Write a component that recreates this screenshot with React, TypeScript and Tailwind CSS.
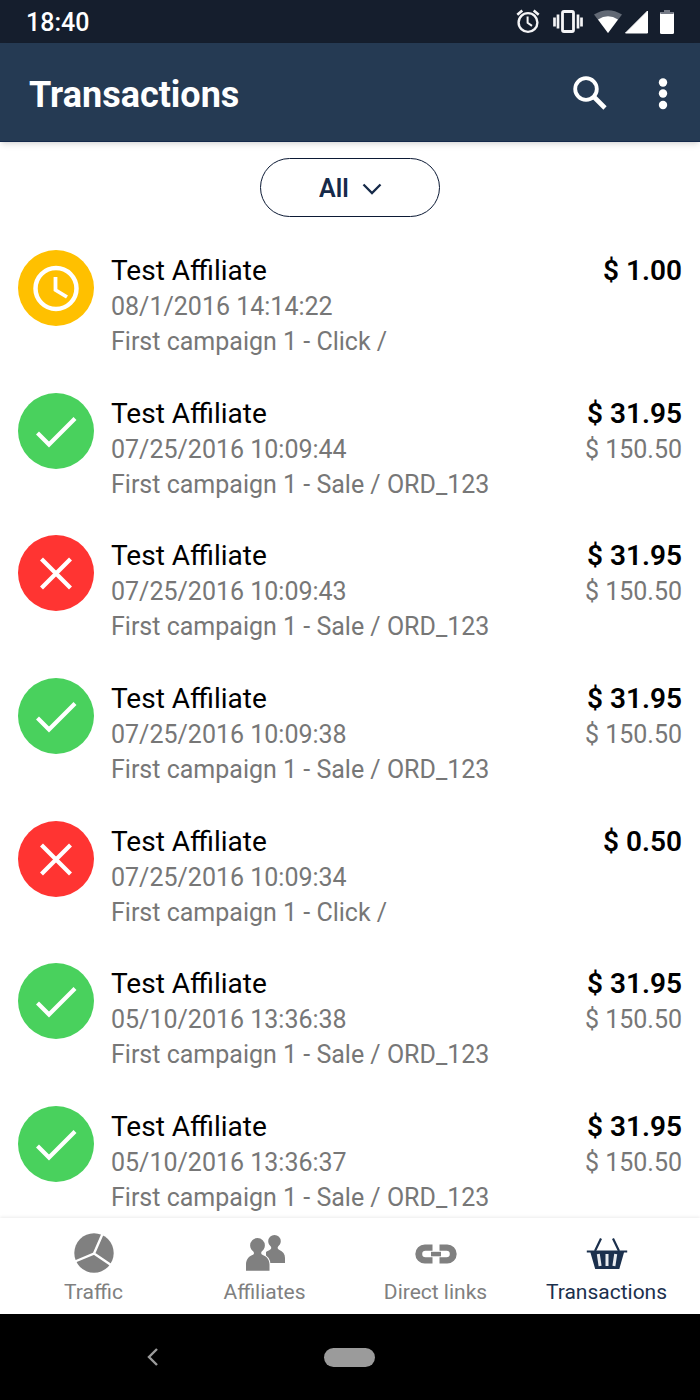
import { useState } from "react";

type Status = "pending" | "approved" | "declined";

interface Transaction {
  id: number;
  status: Status;
  date: string;
  details: string;
  commission: string;
  total?: string;
}

const transactions: Transaction[] = [
  { id: 1, status: "pending", date: "08/1/2016 14:14:22", details: "First campaign 1 - Click /", commission: "$ 1.00" },
  { id: 2, status: "approved", date: "07/25/2016 10:09:44", details: "First campaign 1 - Sale / ORD_123", commission: "$ 31.95", total: "$ 150.50" },
  { id: 3, status: "declined", date: "07/25/2016 10:09:43", details: "First campaign 1 - Sale / ORD_123", commission: "$ 31.95", total: "$ 150.50" },
  { id: 4, status: "approved", date: "07/25/2016 10:09:38", details: "First campaign 1 - Sale / ORD_123", commission: "$ 31.95", total: "$ 150.50" },
  { id: 5, status: "declined", date: "07/25/2016 10:09:34", details: "First campaign 1 - Click /", commission: "$ 0.50" },
  { id: 6, status: "approved", date: "05/10/2016 13:36:38", details: "First campaign 1 - Sale / ORD_123", commission: "$ 31.95", total: "$ 150.50" },
  { id: 7, status: "approved", date: "05/10/2016 13:36:37", details: "First campaign 1 - Sale / ORD_123", commission: "$ 31.95", total: "$ 150.50" },
];

const statusColors: Record<Status, string> = {
  pending: "bg-[#ffc000]",
  approved: "bg-[#49d15d]",
  declined: "bg-[#ff3432]",
};

function StatusIcon({ status }: { status: Status }) {
  return (
    <span className={`flex size-[76px] shrink-0 items-center justify-center rounded-full ${statusColors[status]}`}>
      <svg className="size-[76px]" viewBox="0 0 76 76" fill="none" stroke="#fff" role="img" aria-label={status}>
        {status === "pending" && (
          <>
            <circle cx="38" cy="38.5" r="20.5" strokeWidth="4.5" />
            <path d="M37.5 27v13l11.5 7" strokeWidth="3.8" />
          </>
        )}
        {status === "approved" && <path d="M19.5 40 31 51.5l26-26" strokeWidth="4.2" />}
        {status === "declined" && <path d="m23.5 24 29 29M52.5 24l-29 29" strokeWidth="4.2" />}
      </svg>
    </span>
  );
}

function StatusBar() {
  return (
    <div className="flex h-[43px] items-center justify-between bg-[#151e2d] px-[26px] pt-px text-white">
      <span className="pt-px text-[25px] font-medium">18:40</span>
      <svg className="h-[26px] w-[158px]" viewBox="0 0 158 26" fill="none" stroke="#f4f4f6" aria-hidden="true">
        {/* alarm */}
        <circle cx="12" cy="13.5" r="9.4" strokeWidth="2.4" />
        <path d="M11.6 7.5v6.3l4.4 3" strokeWidth="2" />
        <path d="M1.3 5.8 6.3 1.5M17.7 1.5l5 4.3" strokeWidth="2.6" />
        {/* vibrate */}
        <rect x="46.500" y="2.500" width="11" height="20" rx="1.500" strokeWidth="2.800" />
        <path d="M38.500 8.500v9M42 5.500v14M62 5.500v14M65.500 8.500v9" strokeWidth="2.700" />
        {/* wifi */}
        <path d="M78 5.500Q92-3 106 5.500L92 24z" fill="#626975" stroke="none" />
        <path d="M82 10.500Q92 4 102 10.500L92 24z" fill="#fff" stroke="none" />
        {/* cell signal */}
        <path d="M131.500 2v22h-22z" fill="#fff" stroke="#fff" strokeLinejoin="round" />
        {/* battery */}
        <path d="M148 1h6v3h-6z" fill="#747985" stroke="none" />
        <rect x="144" y="3" width="14" height="22" rx="1.500" fill="#fff" stroke="none" />
        <path d="M144.500 3h13v2h-13z" fill="#747985" stroke="none" />
      </svg>
    </div>
  );
}

function Header() {
  return (
    <header className="flex h-[99px] items-center justify-between border-b border-[#13284a] bg-[#253a53] pt-1 pr-[19px] pl-[29px] text-white shadow-md">
      <h1 className="pt-[2px] text-[36px] font-bold">Transactions</h1>
      <div className="flex items-center gap-[37px]">
        <button type="button" aria-label="Search">
          <svg className="size-9" viewBox="0 0 36 36" fill="none" stroke="#fff">
            <circle cx="14" cy="13" r="10.8" strokeWidth="3.8" />
            <path d="M21.5 20.500 33 32" strokeWidth="4.600" />
          </svg>
        </button>
        <button type="button" aria-label="More options">
          <svg className="size-9" viewBox="0 0 36 36" fill="#fff">
            <circle cx="18" cy="6.5" r="4.2" />
            <circle cx="18" cy="17.5" r="4.2" />
            <circle cx="18" cy="29" r="4.2" />
          </svg>
        </button>
      </div>
    </header>
  );
}

function TransactionRow({ item }: { item: Transaction }) {
  return (
    <li className="flex items-start">
      <StatusIcon status={item.status} />
      <div className="ml-[17px] min-w-0 flex-1 text-[25px] leading-[35px] text-[#777]">
        <h2 className="pt-[2px] text-[28px] leading-[37px] text-black">Test Affiliate</h2>
        <p>{item.date}</p>
        <p>{item.details}</p>
      </div>
      <div className="text-right text-[25px] leading-[35px] text-[#777]">
        <p className="pt-[2px] text-[28px] leading-[37px] font-semibold text-black">{item.commission}</p>
        {item.total && <p>{item.total}</p>}
      </div>
    </li>
  );
}

function TrafficIcon() {
  return (
    <svg className="h-10 w-[42px]" viewBox="0 0 42 40" fill="currentColor">
      <circle cx="21" cy="20" r="19.7" />
      <path d="M29.5 1 21 20.500 2 28.500M21 20.500 38 32" fill="none" stroke="#fff" strokeWidth="2.400" />
    </svg>
  );
}

function AffiliatesIcon() {
  return (
    <svg className="h-10 w-[42px]" viewBox="0 0 42 40" fill="currentColor">
      <path d="M30.5 2a6.3 6.3 0 0 1 6.3 6.3c0 2.600-1.600 4-2.700 5.300-.9 1.200-.5 2.400.9 3.100 4 1.600 6 4.300 6 8.300v5H22V19c1.500-1 3-1.600 4-2.300 1.400-.7 1.600-1.900.8-3.100-1-1.300-2.600-2.700-2.600-5.300A6.300 6.300 0 0 1 30.500 2Z" />
      <path
        d="M13.500 5a7.400 7.400 0 0 1 7.400 7.400c0 3-1.900 4.700-3.200 6.200-1 1.300-.4 2.700 1 3.300 4.500 1.700 6.800 5 6.800 9.600v6.300H2v-6.300c0-4.600 2.300-7.900 6.300-9.600 2-.6 2-2 1-3.300-1.300-1.500-3.200-3.200-3.200-6.200A7.400 7.400 0 0 1 13.500 5Z"
        stroke="#fff"
        strokeWidth="2"
        paintOrder="stroke"
      />
    </svg>
  );
}

function LinksIcon() {
  return (
    <svg className="h-10 w-[42px]" viewBox="0 0 42 40" fill="currentColor">
      <path d="M17.500 11.500h-7.700a9.500 9.500 0 0 0 0 19h7.700v-6.200h-7a3.300 3.300 0 0 1 0-6.600h7ZM24.500 11.500h7.700a9.500 9.500 0 0 1 0 19h-7.700v-6.200h7a3.300 3.300 0 0 0 0-6.600h-7Z" />
      <path d="M16 18.800h10v4.500H16z" />
    </svg>
  );
}

function BasketIcon() {
  return (
    <svg className="h-10 w-[42px]" viewBox="0 0 42 40" fill="currentColor">
      <path d="M15 5.500 9 18M27 5.500 33 18" fill="none" stroke="currentColor" strokeWidth="2.200" />
      <path d="M.8 17.500h40.400v2H38l-4.700 16.500H9.200L4.400 19.500H.8z" />
      <path d="m12.300 21 1.800 12M21 21v12M29.700 21l-1.800 12" fill="none" stroke="#e8ebef" strokeWidth="3" />
    </svg>
  );
}

const tabs = [
  { label: "Traffic", Icon: TrafficIcon, active: false },
  { label: "Affiliates", Icon: AffiliatesIcon, active: false },
  { label: "Direct links", Icon: LinksIcon, active: false },
  { label: "Transactions", Icon: BasketIcon, active: true },
];

export default function App() {
  const [filter, setFilter] = useState("All");

  return (
    <div className="flex min-h-screen flex-col bg-white font-[Roboto,sans-serif]">
      <StatusBar />
      <Header />

      <main className="flex flex-1 flex-col px-[18px] pt-4 pb-[3px]">
        <div className="relative self-center text-[#162a49]">
          <select
            aria-label="Status filter"
            value={filter}
            onChange={(e) => setFilter(e.target.value)}
            className="block h-[59px] w-[180px] appearance-none rounded-full border border-[#0c1a35] bg-white pt-[2px] pl-[58px] text-[25px] font-semibold"
          >
            <option>All</option>
            <option>Approved</option>
            <option>Pending</option>
            <option>Declined</option>
          </select>
          <svg
            className="pointer-events-none absolute top-5 right-[58px] h-6 w-5"
            viewBox="0 0 20 24"
            fill="none"
            stroke="currentColor"
            strokeWidth="2.3"
            aria-hidden="true"
          >
            <path d="m1.500 6.500 8.500 8.500 8.500-8.500" />
          </svg>
        </div>

        <ul className="mt-[33px] flex flex-1 flex-col justify-between gap-6">
          {transactions.map((item) => (
            <TransactionRow key={item.id} item={item} />
          ))}
        </ul>
      </main>

      <nav className="flex h-24 bg-white px-2 shadow-[0_-1px_3px_rgba(0,0,0,0.08)]">
        {tabs.map(({ label, Icon, active }) => (
          <a
            key={label}
            href="#"
            aria-current={active ? "page" : undefined}
            className={`flex flex-1 flex-col items-center pt-[15px] text-[21px] ${active ? "text-[#1b304d]" : "text-[#808080]"}`}
          >
            <Icon />
            <span className="mt-1 leading-[30px]">{label}</span>
          </a>
        ))}
      </nav>

      {/* Android system navigation */}
      <div className="grid h-[86px] grid-cols-3 items-center justify-items-center bg-black px-[54px] text-[#9b9b9b]">
        <button type="button" aria-label="Back">
          <svg className="size-5" viewBox="0 0 20 20" fill="none" stroke="currentColor" strokeWidth="2.4">
            <path d="m14 2-8 8 8 8" />
          </svg>
        </button>
        <button type="button" aria-label="Home" className="h-[19px] w-[51px] rounded-full bg-[#9b9b9b]" />
      </div>
    </div>
  );
}
